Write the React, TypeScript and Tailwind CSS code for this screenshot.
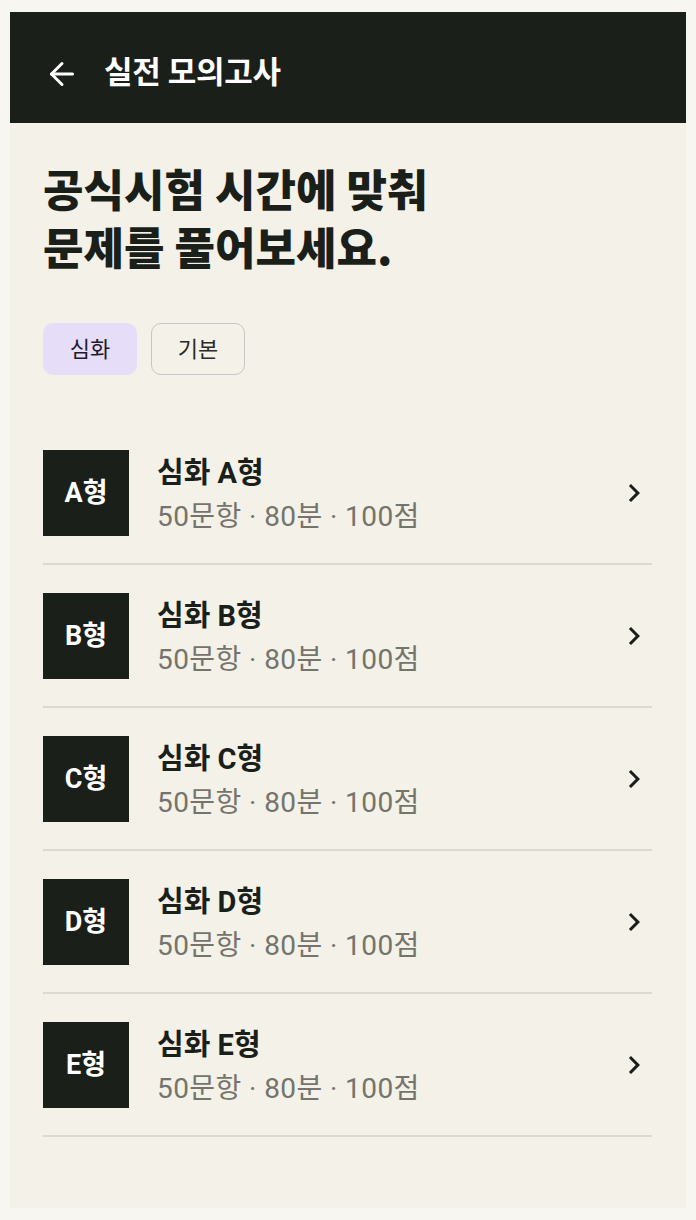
import React from 'react';
import { ArrowLeft } from 'lucide-react';

const exams = ['A', 'B', 'C', 'D', 'E'];

const font = "font-['Roboto','Noto_Sans_CJK_KR',sans-serif]";

// material style chevron
const Chevron = () => (
  <svg width="36" height="36" viewBox="0 0 24 24" fill="#1b1f1a">
    <path d="M10 6 8.59 7.41 13.17 12l-4.58 4.59L10 18l6-6z" />
  </svg>
);

const App = () => {
  return (
    <div className={`min-h-screen bg-[#f7f6f1] px-[10px] pt-[12px] pb-[12px] ${font}`}>
      <div className="min-h-[1196px] bg-[#f3f1e8]">
        {/* HEADER */}
        <div className="flex h-[111px] items-center bg-[#1b1f1a] pl-[34px] pt-[12px]">
          <ArrowLeft size={36} strokeWidth={2} className="text-white" />
          <h1 className="ml-[24px] text-[31px] font-bold tracking-[-0.01em] text-white">실전 모의고사</h1>
        </div>

        <div className="px-[33px] pt-[36px]">
          {/* TITLE */}
          <h2 className="text-[44px] font-black leading-[58px] text-[#1b1f1a] font-['Noto_Sans_CJK_KR',sans-serif]">
            공식시험 시간에 맞춰
            <br />
            문제를 풀어보세요.
          </h2>

          {/* TABS */}
          <div className="mt-[48px] flex gap-[14px]">
            <button className="h-[52px] w-[94px] rounded-[10px] bg-[#e6def8] text-[22px] text-[#1e1b2c]">심화</button>
            <button className="h-[52px] w-[94px] rounded-[10px] border-[1.5px] border-[#c9c4c6] text-[22px] text-[#2a2a28]">기본</button>
          </div>

          {/* LIST */}
          <div className="mt-[47px] w-[609px]">
            {exams.map((t) => (
              <div key={t} className="flex items-center border-b-2 border-[#dcd9d0] pt-[28px] pb-[27px]">
                <div className="flex h-[86px] w-[86px] items-center justify-center bg-[#1b1f1a] text-[27px] font-bold text-white">
                  {t}형
                </div>
                <div className="ml-[28px] flex flex-1 flex-col pt-[3px]">
                  <span className="text-[29px] font-bold leading-[36px] text-[#1b1f1a]">심화 {t}형</span>
                  <span className="mt-[8px] text-[28px] leading-[36px] tracking-[0.015em] text-[#74746c]">50문항 · 80분 · 100점</span>
                </div>
                <Chevron />
              </div>
            ))}
          </div>
        </div>
      </div>
    </div>
  );
};

export default App;
